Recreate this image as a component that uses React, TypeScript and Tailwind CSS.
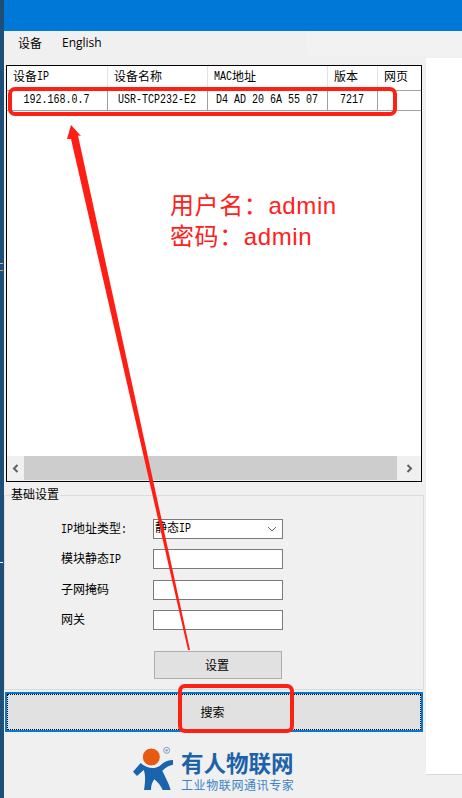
const CJK = "font-['Liberation_Mono','Noto_Sans_CJK_SC',monospace]";

const columns = [
  { cjk: '设备', latin: 'IP', value: '192.168.0.7' },
  { cjk: '设备名称', latin: '', value: 'USR-TCP232-E2' },
  { latin: 'MAC', cjk: '地址', value: 'D4 AD 20 6A 55 07', latinFirst: true },
  { cjk: '版本', latin: '', value: '7217' },
  { cjk: '网页', latin: '', value: '' },
];

// SimSun latin is 6px wide but taller than Liberation Mono at that width
const Latin = ({ children }: { children: string }) => (
  <span className="inline-block scale-y-[1.2] whitespace-pre text-[10px]">{children}</span>
);

const DeviceTable = () => (
  <div className="ml-[2px] mt-[10px] flex h-[417px] w-[416px] flex-col border border-black bg-white">
    <div className="grid h-[25px] shrink-0 grid-cols-[101px_100px_120px_50px_43px] border-b border-[#a0a0a0]">
      {columns.map((col, i) => (
        <div
          key={i}
          className="flex items-center border-r border-[#e3e3e3] pl-[6px] text-[12px] leading-none text-black last:border-r-0"
        >
          {col.latinFirst ? (
            <>
              <Latin>{col.latin}</Latin>
              {col.cjk}
            </>
          ) : (
            <>
              {col.cjk}
              {col.latin && <Latin>{col.latin}</Latin>}
            </>
          )}
        </div>
      ))}
    </div>
    <div className="grid h-[20px] shrink-0 grid-cols-[101px_100px_120px_50px_43px] border-b border-[#a0a0a0]">
      {columns.map((col, i) => (
        <div
          key={i}
          className="flex items-center justify-center border-r border-[#a0a0a0] pr-[1px] pt-[1px] leading-none text-black last:border-r-0"
        >
          {col.value && <Latin>{col.value}</Latin>}
        </div>
      ))}
    </div>
    <div className="flex-1" />
    {/* Horizontal scrollbar */}
    <div className="flex h-[25px] shrink-0 bg-[#f0f0f0] pb-[1px]">
      <div className="flex w-[17px] items-center justify-center">
        <svg width="7" height="9" viewBox="0 0 7 9">
          <path d="M5.5 1 L2 4.5 L5.5 8" fill="none" stroke="#606060" strokeWidth="2" />
        </svg>
      </div>
      <div className="flex-1 bg-[#cdcdcd]" />
      <div className="flex w-[24px] items-center justify-center">
        <svg width="7" height="9" viewBox="0 0 7 9">
          <path d="M1.5 1 L5 4.5 L1.5 8" fill="none" stroke="#606060" strokeWidth="2" />
        </svg>
      </div>
    </div>
  </div>
);

const FormRow = ({ label, value, arrow }: { label: React.ReactNode; value?: React.ReactNode; arrow?: boolean }) => (
  <div className="flex h-[20px] items-center">
    <div className="w-[92px] pt-[1px] text-[12px] leading-none text-black">{label}</div>
    <div className="flex h-[20px] w-[130px] items-center justify-between border border-[#7a7a7a] bg-white pl-[1px] pr-[5px] text-[12px] leading-none text-black">
      <span>{value}</span>
      {arrow && (
        <svg width="10" height="6" viewBox="0 0 10 6">
          <path d="M1 1 L5 5 L9 1" fill="none" stroke="#606060" strokeWidth="1" />
        </svg>
      )}
    </div>
  </div>
);

const SettingsGroup = () => (
  <div className="relative mt-[13px] h-[195px] w-[420px] border border-[#dcdcdc]">
    <span className="absolute left-[6px] top-[-7px] bg-[#f0f0f0] pr-[1px] pt-[1px] text-[12px] leading-[13px] text-black">
      基础设置
    </span>
    <div className="flex flex-col pl-[56px] pt-[23px]">
      <FormRow
        label={<>
          <Latin>IP</Latin>地址类型<Latin>:</Latin>
        </>}
        value={<>静态<Latin>IP</Latin></>}
        arrow
      />
      <div className="mt-[10px]">
        <FormRow label={<>模块静态<Latin>IP</Latin></>} />
      </div>
      <div className="mt-[11px]">
        <FormRow label="子网掩码" />
      </div>
      <div className="mt-[10px]">
        <FormRow label="网关" />
      </div>
      <div className="ml-[93px] mt-[21px] flex h-[28px] w-[128px] items-center justify-center border border-[#adadad] bg-[#e1e1e1] pr-[2px] pt-[3px] text-[12px] leading-none text-black">
        设置
      </div>
    </div>
  </div>
);

const Logo = () => (
  <div className="mt-[14px] flex items-start pl-[129px]">
    <svg width="41" height="46" viewBox="24 20 123 138" className="shrink-0">
      <path
        d="M47 71 L24 97 L36 110 L56 92 C61 104 62 120 57 152 L78 152 C78 138 82 128 88 120 C98 128 108 140 113 152 L137 152 C132 132 120 112 112 94 C122 84 132 78 144 76 L144 62 C128 62 116 68 104 80 C88 90 66 88 47 71 Z"
        fill="#1a64ae"
      />
      <circle cx="79" cy="53" r="27" fill="#e85a12" stroke="#f0f0f0" strokeWidth="3" />
      <circle cx="125" cy="33" r="9" fill="none" stroke="#7d9fc4" strokeWidth="3" />
      <circle cx="125" cy="33" r="3.5" fill="#7d9fc4" />
    </svg>
    <div className="ml-[7px] mt-[4px] flex flex-col font-['Noto_Sans_CJK_SC',sans-serif]">
      <span className="text-[22.5px] font-bold leading-[25px] text-[#1c62a8]">有人物联网</span>
      <span className="mt-[3px] text-[12px] leading-[13px] tracking-[0.6px] text-[#3b84c4]">
        工业物联网通讯专家
      </span>
    </div>
  </div>
);

const Annotations = () => (
  <>
    <svg width="462" height="798" viewBox="0 0 462 798" className="pointer-events-none absolute left-0 top-0">
      <rect x="10" y="89" width="385" height="25" rx="5" fill="none" stroke="#ff2014" strokeWidth="4" />
      <rect x="180" y="686" width="112" height="45" rx="5" fill="none" stroke="#ff2014" strokeWidth="4" />
      <path d="M71 125 L81 136 L78 135.5 L190 650 L188 650 L71 139 L67 139 Z" fill="#ff1e14" />
    </svg>
    <div className="absolute left-[170px] top-[190px] font-['Liberation_Sans','Noto_Sans_CJK_SC',sans-serif] text-[24px] leading-[31px] tracking-[0.6px] text-[#ff2020]">
      <div>用户名：admin</div>
      <div>密码：admin</div>
    </div>
  </>
);

const App = () => {
  return (
    <div className={`relative flex h-[798px] w-[462px] overflow-hidden bg-[#f0f0f0] ${CJK}`}>
      {/* Desktop edge */}
      <div className="relative w-[4px] shrink-0 bg-[#1f4e79]">
        <span className="absolute left-0 top-[263px] h-[1px] w-[3px] bg-[#e0b080]" />
        <span className="absolute left-0 top-[270px] h-[1px] w-[3px] bg-[#e0a060]" />
        <span className="absolute left-0 top-[562px] h-[1px] w-[3px] bg-white" />
      </div>

      <div className="flex flex-1 flex-col">
        <div className="h-[31px] shrink-0 bg-[#0078d7]" />

        <div className="flex flex-1">
          <div className="w-[422px] shrink-0">
            {/* Menu */}
            <div className="flex h-[24px] items-center pl-[14px] text-[12px] leading-none text-black">
              <span className="font-['Noto_Sans_CJK_SC',sans-serif]">设备</span>
              <span className="ml-[20px] font-['Open_Sans',sans-serif]">English</span>
              <div className="ml-auto h-full w-[119px] bg-[#f2f2f2]" />
            </div>

            <DeviceTable />

            <SettingsGroup />

            {/* Search */}
            <div className="ml-[1px] mt-[2px] h-[40px] w-[418px] border-2 border-[#0078d7]">
              <div className="flex h-full items-center justify-center border border-dotted border-black bg-[#e1e1e1] pr-[3px] pt-[4px] text-[12px] leading-none text-black">
                搜索
              </div>
            </div>

            <Logo />
          </div>

          <div className="flex flex-1 flex-col">
            <div className="h-[24px] shrink-0 bg-[#f2f2f2]" />
            <div className="h-[3px] shrink-0" />
            <div className="h-[716px] shrink-0 bg-white" />
            <div className="h-[1px] shrink-0 bg-[#d8d8d8]" />
          </div>
        </div>
      </div>

      <Annotations />
    </div>
  );
};

export default App;
